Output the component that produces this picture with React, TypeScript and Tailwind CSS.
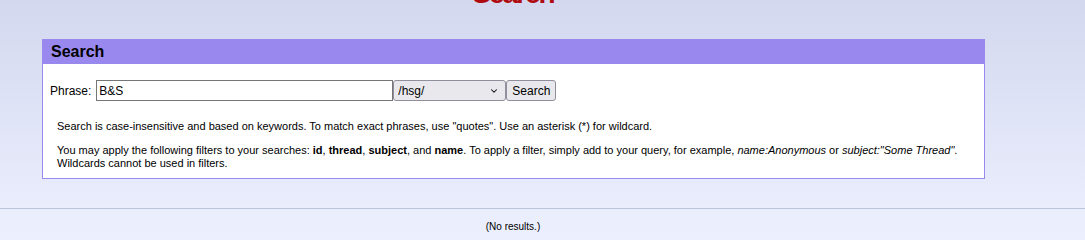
import { ChevronDown } from "lucide-react";

export default function App() {
  return (
    <div
      className="w-[1085px] h-[240px] overflow-hidden bg-gradient-to-b from-[#d4d8ef] to-[#ecf0fe] text-black"
      style={{ fontFamily: '"Liberation Sans", Arial, sans-serif' }}
    >
      <div className="w-[1026px] text-center">
        <h1 className="-mt-[20px] text-[28px] leading-[28px] font-bold tracking-[-2px] text-[#af0a0f]">
          Search
        </h1>
      </div>

      <div className="mt-[31px] ml-[42px] w-[943px] border border-t-0 border-[#9988ee] bg-white">
        <div className="h-[25px] bg-[#9988ee] pl-[8px] text-[16px] font-bold leading-[25px]">
          Search
        </div>
        <div className="px-[7px] pt-[16px] pb-[8px]">
          <div className="flex items-center text-[12px]">
            <span className="mr-[5px]">Phrase:</span>
            <input
              defaultValue="B&S"
              className="h-[21px] w-[297px] border border-[#767676] px-[2px] text-[12px] outline-none"
            />
            <div className="relative">
              <select className="h-[21px] w-[113px] appearance-none rounded-[3px] border border-[#8f8f9d] bg-[#e9e9ed] pl-[4px] text-[12px]">
                <option>/hsg/</option>
              </select>
              <ChevronDown className="pointer-events-none absolute right-[7px] top-[6px] h-[10px] w-[10px]" strokeWidth={2.5} />
            </div>
            <button className="h-[21px] rounded-[3px] border border-[#8f8f9d] bg-[#e9e9ed] px-[5px] text-[12px]">
              Search
            </button>
          </div>
          <div className="mt-[19px] pl-[7px] text-[11px] leading-[13px]">
            <p>
              Search is case-insensitive and based on keywords. To match exact phrases, use "quotes". Use an asterisk (*) for
              wildcard.
            </p>
            <p className="mt-[11px]">
              You may apply the following filters to your searches: <b>id</b>, <b>thread</b>, <b>subject</b>, and <b>name</b>.
              To apply a filter, simply add to your query, for example, <i>name:Anonymous</i> or <i>subject:"Some Thread"</i>.
              <br />
              Wildcards cannot be used in filters.
            </p>
          </div>
        </div>
      </div>

      <hr className="mt-[29px] border-0 border-t border-[#b7c5d9]" />
      <div className="w-[1026px] pt-[10px] text-center text-[10px]">(No results.)</div>
    </div>
  );
}
